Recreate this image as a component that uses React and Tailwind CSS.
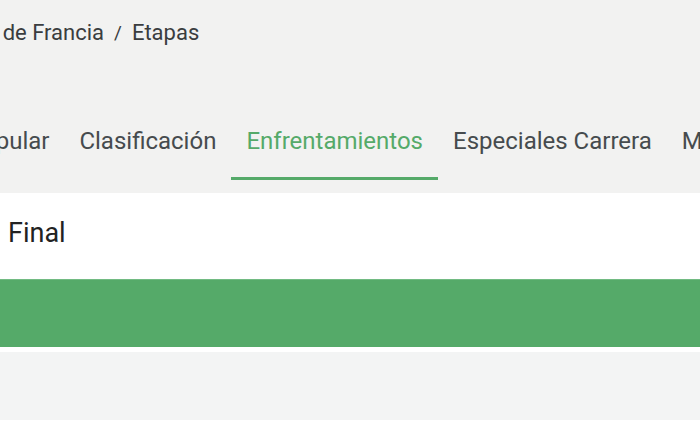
import React from "react";

const tabs = [
  { label: "Popular", active: false },
  { label: "Clasificación", active: false },
  { label: "Enfrentamientos", active: true },
  { label: "Especiales Carrera", active: false },
  { label: "Más", active: false },
];

export default function App() {
  return (
    <div
      className="w-[700px] h-[441px] overflow-hidden bg-white"
      style={{ fontFamily: "Roboto, 'Noto Sans', sans-serif" }}
    >
      {/* HEADER */}
      <div className="bg-[#f2f2f1] overflow-hidden">
        {/* BREADCRUMB */}
        <div className="flex items-center whitespace-nowrap pt-[20px] ml-[-47px] text-[22px] leading-[26px] text-[#3a3d3f]">
          <span>Tour de Francia</span>
          <span className="mx-[10px] text-[19px]">/</span>
          <span>Etapas</span>
        </div>

        {/* TABS */}
        <div className="flex whitespace-nowrap mt-[80px] ml-[-48px] mb-[13px]">
          {tabs.map((t) => (
            <div
              key={t.label}
              className={
                t.active
                  ? "px-[15px] pt-[1px] pb-[22px] border-b-[3px] border-[#55aa69] text-[#55aa69] text-[24px] leading-[28px]"
                  : "px-[15px] pt-[1px] pb-[22px] border-b-[3px] border-transparent text-[#464b4e] text-[24px] leading-[28px]"
              }
            >
              {t.label}
            </div>
          ))}
        </div>
      </div>

      {/* TITLE */}
      <div className="h-[86px] flex items-center pl-2 pb-[6px] text-[27px] text-[#222222]">
        Final
      </div>

      {/* GREEN BAR */}
      <div className="h-[68px] bg-[#55aa69] border-t border-[#72bb83]" />

      {/* GREY ROW */}
      <div className="mt-[5px] h-[68px] bg-[#f3f4f4]" />
    </div>
  );
}
